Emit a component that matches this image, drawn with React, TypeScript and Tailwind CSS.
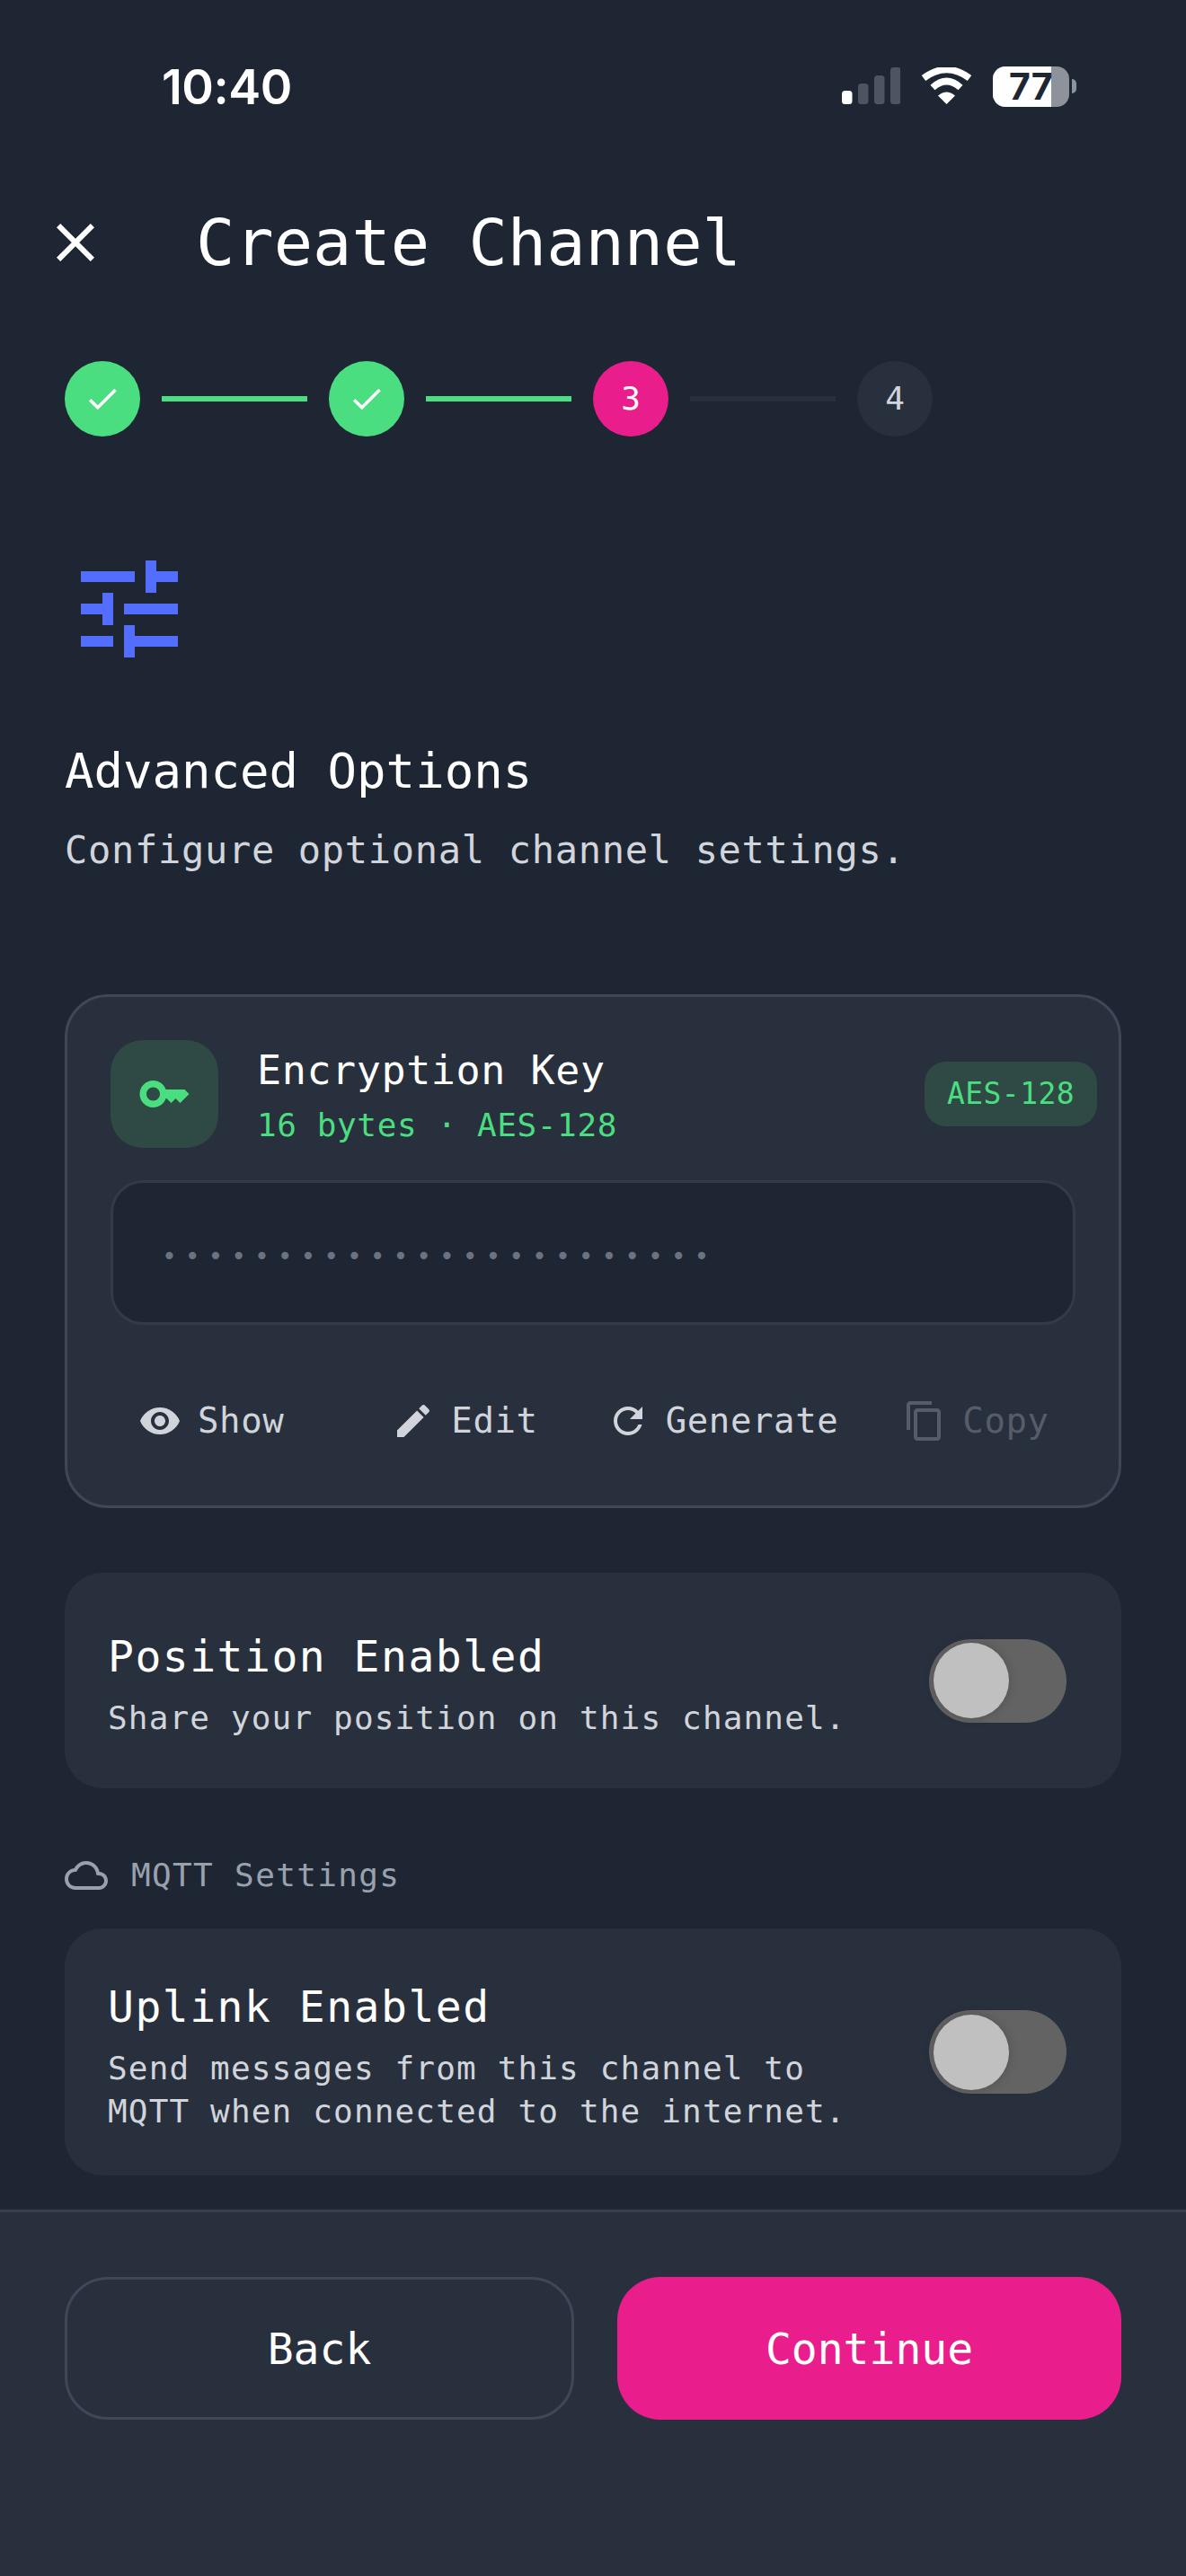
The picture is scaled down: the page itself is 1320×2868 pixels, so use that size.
import React from "react";

const mono = "font-['DejaVu_Sans_Mono','Liberation_Mono',monospace]";

function Icon({ d, size, color, className = "" }: { d: string; size: number; color: string; className?: string }) {
  return (
    <svg width={size} height={size} viewBox="0 0 24 24" fill={color} className={"shrink-0 " + className}>
      <path d={d} />
    </svg>
  );
}

const P = {
  close: "M19 6.41L17.59 5 12 10.59 6.41 5 5 6.41 10.59 12 5 17.59 6.41 19 12 13.41 17.59 19 19 17.59 13.41 12z",
  check: "M9 16.17L4.83 12l-1.41 1.41L9 19 21 7l-1.41-1.41z",
  tune: "M3 17v2h6v-2H3zM3 5v2h10V5H3zm10 16v-2h8v-2h-8v-2h-2v6h2zM7 9v2H3v2h4v2h2V9H7zm14 4v-2H11v2h10zm-6-4h2V7h4V5h-4V3h-2v6z",
  key: "M21 10h-8.35C11.83 7.67 9.61 6 7 6c-3.31 0-6 2.69-6 6s2.69 6 6 6c2.61 0 4.83-1.67 5.65-4H13l2 2 2-2 2 2 4-4.04L21 10zM7 15c-1.65 0-3-1.35-3-3s1.35-3 3-3 3 1.35 3 3-1.35 3-3 3z",
  eye: "M12 4.5C7 4.5 2.73 7.61 1 12c1.73 4.39 6 7.5 11 7.5s9.27-3.11 11-7.5c-1.73-4.39-6-7.5-11-7.5zM12 17c-2.76 0-5-2.24-5-5s2.24-5 5-5 5 2.24 5 5-2.24 5-5 5zm0-8c-1.66 0-3 1.34-3 3s1.34 3 3 3 3-1.34 3-3-1.34-3-3-3z",
  edit: "M3 17.25V21h3.75L17.81 9.94l-3.75-3.75L3 17.25zM20.71 7.04c.39-.39.39-1.02 0-1.41l-2.34-2.34c-.39-.39-1.02-.39-1.41 0l-1.83 1.83 3.75 3.75 1.83-1.83z",
  refresh: "M17.65 6.35C16.2 4.9 14.21 4 12 4c-4.42 0-7.99 3.58-7.99 8s3.57 8 7.99 8c3.73 0 6.84-2.55 7.73-6h-2.08c-.82 2.33-3.04 4-5.65 4-3.31 0-6-2.69-6-6s2.69-6 6-6c1.66 0 3.14.69 4.22 1.78L13 11h7V4l-2.35 2.35z",
  copy: "M16 1H4c-1.1 0-2 .9-2 2v14h2V3h12V1zm3 4H8c-1.1 0-2 .9-2 2v14c0 1.1.9 2 2 2h11c1.1 0 2-.9 2-2V7c0-1.1-.9-2-2-2zm0 16H8V7h11v14z",
  cloud: "M12 6c2.62 0 4.88 1.86 5.39 4.43l.3 1.5 1.53.11c1.56.1 2.78 1.41 2.78 2.96 0 1.65-1.35 3-3 3H6c-2.21 0-4-1.79-4-4 0-2.05 1.53-3.76 3.56-3.97l1.07-.11.5-.95C8.08 7.14 9.94 6 12 6m0-2C9.11 4 6.6 5.64 5.35 8.04 2.34 8.36 0 10.91 0 14c0 3.31 2.69 6 6 6h13c2.76 0 5-2.24 5-5 0-2.64-2.05-4.78-4.65-4.96C18.67 6.59 15.64 4 12 4z",
};

function StatusBar() {
  return (
    <div className="h-[194px] flex items-center pl-[180px] pr-[122px] justify-between">
      <span className="font-['Inter',sans-serif] font-semibold text-[54px] leading-[60px] text-white tracking-[-0.5px]">10:40</span>
      <div className="flex items-center">
        <svg width="65" height="41" viewBox="0 0 65 41" className="mt-[-3px]">
          <rect x="0" y="26" width="11.5" height="15" rx="3.5" fill="#ffffff" />
          <rect x="18" y="18" width="11.5" height="23" rx="3.5" fill="#4e5460" />
          <rect x="36" y="9" width="11.5" height="32" rx="3.5" fill="#4e5460" />
          <rect x="54" y="0" width="11.5" height="41" rx="3.5" fill="#4e5460" />
        </svg>
        <svg width="57" height="41" viewBox="0 0 57 41" className="ml-[23px] mt-[-3px]">
          <path d="M28.5 41L19 31.5Q28.5 23.5 38 31.5Z" fill="#ffffff" />
          <path d="M13 22.5Q28.5 8.5 44 22.5" fill="none" stroke="#ffffff" strokeWidth="7.5" />
          <path d="M3 12Q28.5 -7 54 12" fill="none" stroke="#ffffff" strokeWidth="7.5" />
        </svg>
        <div className="ml-[23px] flex items-center mt-[-2px]">
          <div className="relative w-[85px] h-[45px] rounded-[14px] bg-[#8e929b]">
            <div className="absolute inset-y-0 left-0 w-[65px] rounded-l-[14px] bg-white" />
            <span className="absolute left-[18px] top-0 font-['Inter',sans-serif] font-bold text-[41px] leading-[45px] text-[#1e2633]">77</span>
          </div>
          <div className="ml-[3px] w-[5px] h-[16px] rounded-r-[5px] bg-[#8e929b]" />
        </div>
      </div>
    </div>
  );
}

function Done() {
  return (
    <div className="w-[84px] h-[84px] rounded-full bg-[#4ade80] flex items-center justify-center">
      <Icon d={P.check} size={42} color="#ffffff" />
    </div>
  );
}

function Line({ on }: { on: boolean }) {
  return <div className={"w-[162px] h-[6px] " + (on ? "bg-[#4ade80]" : "bg-[#29303d]")} />;
}

function Stepper() {
  return (
    <div className="mt-[96px] ml-[72px] flex items-center gap-[24px]">
      <Done />
      <Line on />
      <Done />
      <Line on />
      <div className="w-[84px] h-[84px] rounded-full bg-[#e91e8c] flex items-center justify-center text-[36px] text-white">3</div>
      <Line on={false} />
      <div className="w-[84px] h-[84px] rounded-full bg-[#29303d] flex items-center justify-center text-[36px] text-[#d1d5db]">4</div>
    </div>
  );
}

function Toggle() {
  return (
    <div className="shrink-0 w-[153px] h-[93px] rounded-full bg-[#636363] flex items-center pl-[5px]">
      <div className="w-[84px] h-[84px] rounded-full bg-[#c0c0c0] shadow-[0_0_12px_rgba(0,0,0,0.18)]" />
    </div>
  );
}

function Action({ d, label, iconColor, textColor, ml }: { d: string; label: string; iconColor: string; textColor: string; ml: string }) {
  return (
    <div className={"flex items-center gap-[18px] " + ml}>
      <Icon d={d} size={48} color={iconColor} />
      <span className={"text-[39px] leading-[48px] tracking-[0.6px] " + textColor}>{label}</span>
    </div>
  );
}

export default function App() {
  return (
    <div className={"w-[1320px] h-[2868px] bg-[#1e2633] flex flex-col overflow-hidden " + mono}>
      <StatusBar />
      <div className="flex-1 min-h-0">
        <div className="mt-[40px] pl-[48px] flex items-center">
          <Icon d={P.close} size={72} color="#ffffff" />
          <h1 className="ml-[98px] text-[72px] leading-[72px] text-white font-normal">Create Channel</h1>
        </div>
        <Stepper />
        <div className="mt-[120px] ml-[72px]">
          <Icon d={P.tune} size={144} color="#536dfe" />
        </div>
        <h2 className="mt-[73px] ml-[72px] text-[54px] leading-[72px] text-white font-normal">Advanced Options</h2>
        <p className="mt-[22px] ml-[72px] text-[42px] leading-[60px] tracking-[0.7px] text-[#d1d5db]">Configure optional channel settings.</p>

        <div className="mt-[130px] mx-[72px] h-[572px] rounded-[48px] border-[3px] border-[#3f4759] bg-[#29303d] px-[48px] pt-[48px]">
          <div className="flex items-center">
            <div className="w-[120px] h-[120px] rounded-[36px] bg-[#2f4a45] flex items-center justify-center">
              <Icon d={P.key} size={60} color="#4ade80" />
            </div>
            <div className="ml-[43px] flex-1 h-[120px] pt-[4px]">
              <div className="text-[45px] leading-[60px] tracking-[0.6px] text-white">Encryption Key</div>
              <div className="mt-[7px] text-[36px] leading-[48px] tracking-[0.6px] text-[#4ade80]">16 bytes · AES-128</div>
            </div>
            <div className="mr-[-24px] w-[192px] h-[72px] rounded-[24px] bg-[#2f4a45] flex items-center justify-center text-[33px] tracking-[0.4px] text-[#4ade80]">AES-128</div>
          </div>
          <div className="mt-[36px] h-[161px] rounded-[36px] border-[3px] border-[#333a48] bg-[#1e2633] flex items-center pl-[54px]">
            <span className="text-[28px] leading-[60px] tracking-[8.9px] text-[#6b7280] pt-[8px]">••••••••••••••••••••••••</span>
          </div>
          <div className="mt-[83px] flex items-center">
            <Action d={P.eye} label="Show" iconColor="#d1d5db" textColor="text-[#d1d5db]" ml="ml-[31px]" />
            <Action d={P.edit} label="Edit" iconColor="#d1d5db" textColor="text-[#d1d5db]" ml="ml-[120px]" />
            <Action d={P.refresh} label="Generate" iconColor="#d1d5db" textColor="text-[#d1d5db]" ml="ml-[76px]" />
            <Action d={P.copy} label="Copy" iconColor="#555c6a" textColor="text-[#555c6a]" ml="ml-[72px]" />
          </div>
        </div>

        <div className="mt-[72px] mx-[72px] h-[240px] rounded-[42px] bg-[#29303d] flex items-center justify-between pl-[48px] pr-[61px]">
          <div className="pt-[9px]">
            <div className="text-[48px] leading-[60px] tracking-[1.5px] text-white">Position Enabled</div>
            <div className="mt-[15px] text-[36px] leading-[48px] tracking-[1.15px] text-[#d1d5db]">Share your position on this channel.</div>
          </div>
          <Toggle />
        </div>

        <div className="mt-[73px] ml-[72px] flex items-center gap-[26px]">
          <Icon d={P.cloud} size={48} color="#9aa1ae" />
          <span className="text-[36px] leading-[48px] tracking-[1.35px] text-[#9aa1ae]">MQTT Settings</span>
        </div>

        <div className="mt-[35px] mx-[72px] h-[275px] rounded-[42px] bg-[#29303d] flex items-center justify-between pl-[48px] pr-[61px]">
          <div className="pt-[9px]">
            <div className="text-[48px] leading-[60px] tracking-[1.5px] text-white">Uplink Enabled</div>
            <div className="mt-[15px] text-[36px] leading-[48px] tracking-[1.15px] text-[#d1d5db]">
              <div>Send messages from this channel to</div>
              <div>MQTT when connected to the internet.</div>
            </div>
          </div>
          <Toggle />
        </div>
      </div>

      <div className="h-[408px] shrink-0 border-t-[3px] border-[#383f4d] bg-[#29303d] px-[72px] pt-[72px] flex gap-[48px] items-start">
        <div className="flex-1 h-[159px] rounded-[48px] border-[3px] border-[#3f4759] flex items-center justify-center text-[48px] text-white">Back</div>
        <div className="flex-1 h-[159px] rounded-[48px] bg-[#e91e8c] flex items-center justify-center text-[48px] text-white">Continue</div>
      </div>
    </div>
  );
}
